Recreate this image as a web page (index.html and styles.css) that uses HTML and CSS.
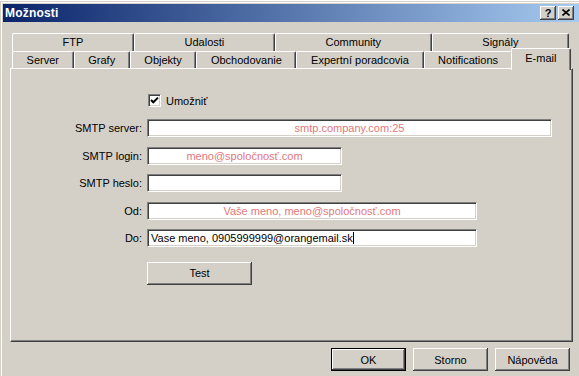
FILE: index.html
```html
<!DOCTYPE html>
<html lang="sk">
<head>
  <meta charset="UTF-8" />
  <title>Možnosti</title>
  <link rel="stylesheet" href="styles.css">
</head>
<body>
  <div class="window">
    <div class="titlebar">
      <span class="title">Možnosti</span>
      <div class="caption-buttons">
        <button class="caption-btn help">?</button>
        <button class="caption-btn">
          <svg width="8" height="7" viewBox="0 0 8 7"><path d="M0.5 0.5 L7.5 6.5 M7.5 0.5 L0.5 6.5" stroke="#000" stroke-width="1.6"/></svg>
        </button>
      </div>
    </div>

    <div class="content">
      <div class="tabs">
        <div class="tab-row">
          <div class="tab">FTP</div>
          <div class="tab">Udalosti</div>
          <div class="tab">Community</div>
          <div class="tab">Signály</div>
        </div>
        <div class="tab-row">
          <div class="tab">Server</div>
          <div class="tab">Grafy</div>
          <div class="tab">Objekty</div>
          <div class="tab">Obchodovanie</div>
          <div class="tab">Expertní poradcovia</div>
          <div class="tab">Notifications</div>
          <div class="tab active">E-mail</div>
        </div>
      </div>

      <div class="panel">
        <div class="form">
          <span></span>
          <label class="check">
            <span class="checkbox">
              <svg width="9" height="9" viewBox="0 0 9 9"><polyline points="1,4 3.3,6.3 8,1.6" fill="none" stroke="#000" stroke-width="2"/></svg>
            </span>
            Umožniť
          </label>

          <label class="label">SMTP server:</label>
          <div class="field wide hint">smtp.company.com:25</div>

          <label class="label">SMTP login:</label>
          <div class="field short hint">meno@spoločnosť.com</div>

          <label class="label">SMTP heslo:</label>
          <div class="field short"></div>

          <label class="label">Od:</label>
          <div class="field mid hint">Vaše meno, meno@spoločnosť.com</div>

          <label class="label">Do:</label>
          <div class="field mid">Vase meno, 0905999999@orangemail.sk<span class="caret"></span></div>

          <span></span>
          <button class="btn test">Test</button>
        </div>
      </div>

      <div class="actions">
        <button class="btn default">OK</button>
        <button class="btn">Storno</button>
        <button class="btn">Nápověda</button>
      </div>
    </div>
  </div>
</body>
</html>
```

FILE: styles.css
```css
* {
  box-sizing: border-box;
  margin: 0;
  padding: 0;
}

body {
  background: #ffffff;
  font-family: 'Liberation Sans', Arial, sans-serif;
  font-size: 11px;
  color: #000;
  overflow: hidden;
}

.window {
  width: 582px;
  height: 380px;
  margin-top: 1px;
  background: #d4d0c8;
  border: 1px solid #d4d0c8;
  box-shadow: inset 1px 1px #ffffff;
  padding: 2px;
}

/* title bar */
.titlebar {
  height: 18px;
  display: flex;
  align-items: center;
  justify-content: space-between;
  padding: 0 5px 0 2px;
  background: linear-gradient(90deg, #0a246a, #a6caf0);
}

.title {
  color: #ffffff;
  font-weight: bold;
  font-size: 12px;
  letter-spacing: 0.2px;
}

.caption-buttons {
  display: flex;
  gap: 2px;
}

.caption-btn {
  width: 16px;
  height: 14px;
  display: flex;
  align-items: center;
  justify-content: center;
  background: #d4d0c8;
  border: none;
  box-shadow: inset -1px -1px #404040, inset 1px 1px #ffffff, inset -2px -2px #808080;
  font-family: 'Liberation Sans', Arial, sans-serif;
  font-weight: bold;
  font-size: 11px;
  line-height: 12px;
  padding-bottom: 1px;
}

/* tabs */
.content {
  padding: 11px 6px 0 7px;
}

.tabs {
  margin: 0 4px 0 2px;
}

.tab-row {
  display: flex;
  height: 18px;
}

.tab-row + .tab-row {
  height: 17px;
}

.tab {
  flex: 1 1 auto;
  display: flex;
  align-items: center;
  justify-content: center;
  padding: 0 4px 1px;
  white-space: nowrap;
  background: #d4d0c8;
  border-top: 1px solid #ffffff;
  border-left: 1px solid #ffffff;
  border-right: 1px solid #404040;
  border-top-left-radius: 2px;
  border-top-right-radius: 2px;
  box-shadow: inset -1px 0 #808080;
}

.tab.active {
  position: relative;
  z-index: 1;
  margin: -3px -2px -2px;
  padding-bottom: 4px;
}

/* panel */
.panel {
  height: 274px;
  border-top: 1px solid #ffffff;
  border-left: 1px solid #ffffff;
  border-right: 1px solid #404040;
  border-bottom: 1px solid #404040;
  box-shadow: inset -1px -1px #808080;
}

.form {
  display: grid;
  grid-template-columns: 125px 1fr;
  grid-template-rows: 15.5px repeat(5, 18px) 23px;
  column-gap: 5px;
  row-gap: 9.5px;
  padding: 25px 0 0 6px;
  align-items: center;
}

.label {
  text-align: right;
}

.check {
  display: flex;
  align-items: center;
  gap: 5px;
  align-self: start;
  margin-left: 1px;
}

.checkbox {
  width: 13px;
  height: 13px;
  display: flex;
  align-items: center;
  justify-content: center;
  background: #ffffff;
  border-top: 1px solid #808080;
  border-left: 1px solid #808080;
  border-right: 1px solid #ffffff;
  border-bottom: 1px solid #ffffff;
  box-shadow: inset 1px 1px #404040, inset -1px -1px #d4d0c8;
}

.field {
  height: 18px;
  background: #ffffff;
  border-top: 1px solid #808080;
  border-left: 1px solid #808080;
  border-right: 1px solid #ffffff;
  border-bottom: 1px solid #ffffff;
  box-shadow: inset 1px 1px #404040, inset -1px -1px #d4d0c8;
  padding: 2px 3px 0;
  line-height: 13px;
  white-space: nowrap;
  overflow: hidden;
}

.field.wide { width: 405px; }
.field.short { width: 195px; }
.field.mid { width: 330px; }

.hint {
  color: #e2777b;
  text-align: center;
}

.caret {
  display: inline-block;
  width: 1px;
  height: 12px;
  background: #000;
  vertical-align: -2px;
}

/* buttons */
.btn {
  height: 23px;
  width: 75px;
  background: #d4d0c8;
  border: none;
  box-shadow: inset -1px -1px #404040, inset 1px 1px #ffffff, inset -2px -2px #808080;
  font-family: 'Liberation Sans', Arial, sans-serif;
  font-size: 11px;
  color: #000;
}

.btn.test {
  width: 105px;
  margin-top: 5px;
  align-self: start;
}

.btn.default {
  border: 1px solid #000;
}

.actions {
  display: flex;
  justify-content: flex-end;
  gap: 7px;
  margin-top: 6px;
  padding-right: 3px;
}
```
